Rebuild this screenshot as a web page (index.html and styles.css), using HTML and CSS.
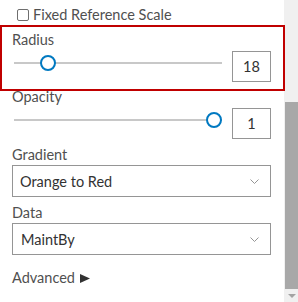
FILE: index.html
```html
<!DOCTYPE html>
<html lang="en">
<head>
  <meta charset="UTF-8" />
  <title>Heatmap Settings</title>
  <link rel="stylesheet" href="styles.css">
</head>
<body>
  <div class="panel">
    <label class="check-row">
      <span class="checkbox"></span>
      <span>Fixed Reference Scale</span>
    </label>

    <div class="field field-first">
      <div class="label">Radius</div>
      <div class="slider-row">
        <div class="slider">
          <div class="track"></div>
          <div class="thumb" style="left: 26px;"></div>
        </div>
        <div class="value-box">18</div>
      </div>
    </div>

    <div class="field">
      <div class="label">Opacity</div>
      <div class="slider-row">
        <div class="slider">
          <div class="track"></div>
          <div class="thumb" style="left: 192px;"></div>
        </div>
        <div class="value-box">1</div>
      </div>
    </div>

    <div class="field field-select">
      <div class="label">Gradient</div>
      <div class="select">
        <span>Orange to Red</span>
        <svg class="chevron" width="9" height="5" viewBox="0 0 9 5"><polyline points="0.5,0.5 4.5,4.5 8.5,0.5" fill="none" stroke="#959595" stroke-width="1"/></svg>
      </div>
    </div>

    <div class="field field-select">
      <div class="label">Data</div>
      <div class="select">
        <span class="select-text-data">MaintBy</span>
        <svg class="chevron" width="9" height="5" viewBox="0 0 9 5"><polyline points="0.5,0.5 4.5,4.5 8.5,0.5" fill="none" stroke="#959595" stroke-width="1"/></svg>
      </div>
    </div>

    <div class="advanced">
      <span>Advanced</span>
      <svg width="10" height="9" viewBox="0 0 10 9"><polygon points="0,0 10,4.5 0,9" fill="#323232"/></svg>
    </div>
  </div>

  <div class="scrollbar">
    <div class="scroll-thumb"></div>
    <svg class="scroll-arrow" width="8" height="4" viewBox="0 0 8 4"><polygon points="0,0 8,0 4,4" fill="#a3a3a3"/></svg>
  </div>

  <div class="highlight"></div>
</body>
</html>
```

FILE: styles.css
```css
* {
  margin: 0;
  padding: 0;
  box-sizing: border-box;
}

body {
  font-family: "Lato", "Liberation Sans", sans-serif;
  font-size: 14.5px;
  color: #505050;
  background: white;
  width: 298px;
  height: 302px;
  overflow: hidden;
  display: flex;
  position: relative;
}

.panel {
  width: 284px;
  padding-left: 12px;
}

.check-row {
  display: flex;
  align-items: center;
  gap: 4px;
  margin-top: 8px;
  margin-left: 5px;
  height: 14px;
  line-height: 16px;
}

.checkbox {
  width: 12px;
  height: 12px;
  border: 1px solid #6e6e6e;
  border-radius: 2px;
  background: white;
}

.field {
  width: 259px;
  margin-top: 7px;
}

.field-first {
  margin-top: 10px;
}

.label {
  height: 16px;
  line-height: 16px;
}

.slider-row {
  display: flex;
  align-items: flex-start;
  gap: 10px;
  margin-top: 3px;
}

.slider {
  position: relative;
  width: 208px;
  height: 24px;
  margin-left: 2px;
}

.track {
  position: absolute;
  left: 0;
  right: 0;
  top: 11px;
  height: 2px;
  background: #c8c8c8;
}

.thumb {
  position: absolute;
  top: 4px;
  width: 16px;
  height: 16px;
  border: 2px solid #0079c1;
  border-radius: 50%;
  background: white;
}

.value-box {
  width: 39px;
  height: 31px;
  border: 1px solid #959595;
  display: flex;
  align-items: center;
  justify-content: center;
  color: #323232;
}

.field-select {
  margin-top: 8px;
}

.field-select .label {
  margin-bottom: 2px;
}

.select {
  height: 32px;
  border: 1px solid #959595;
  display: flex;
  align-items: center;
  justify-content: space-between;
  padding: 0 11px 0 7px;
  color: #323232;
}

.select-text-data {
  margin-left: 1px;
}

.advanced {
  display: flex;
  align-items: center;
  gap: 5px;
  margin-top: 15px;
  height: 16px;
  line-height: 16px;
}

.scrollbar {
  position: relative;
  width: 14px;
  height: 302px;
  background: #f0f0f0;
}

.scroll-thumb {
  position: absolute;
  left: 1px;
  right: 0;
  top: 102px;
  height: 187px;
  background: #a8a8a8;
}

.scroll-arrow {
  position: absolute;
  left: 4px;
  top: 294px;
}

.highlight {
  position: absolute;
  left: 0;
  top: 25px;
  width: 285px;
  height: 66px;
  border: 2px solid #c00000;
  pointer-events: none;
}
```
